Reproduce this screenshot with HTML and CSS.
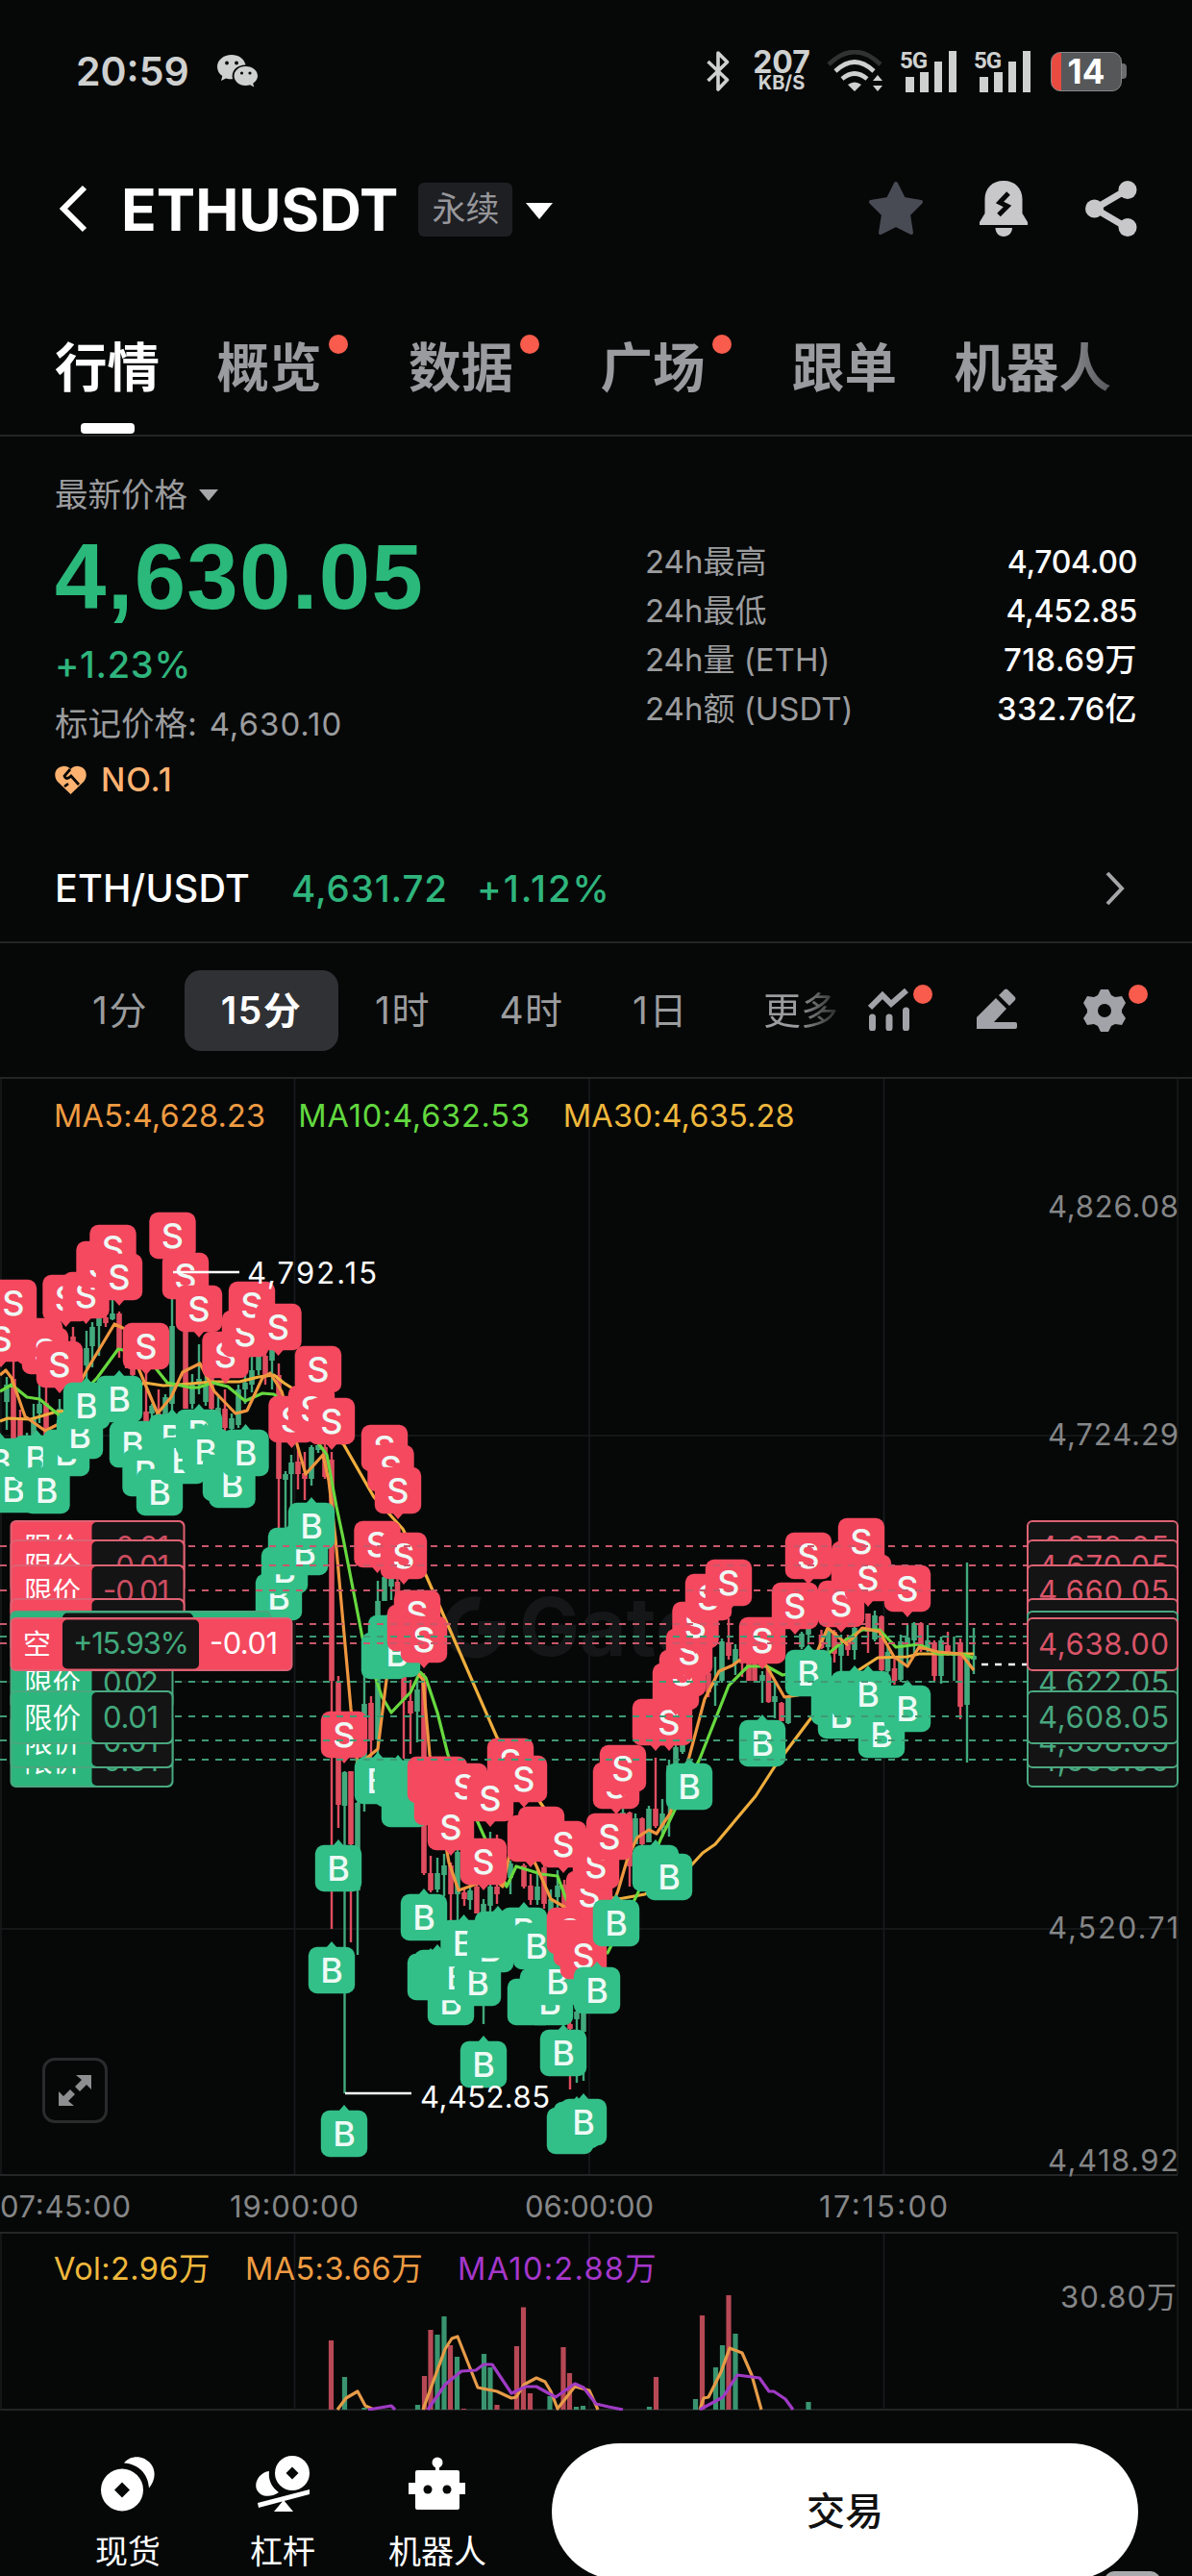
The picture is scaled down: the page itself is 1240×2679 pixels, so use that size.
FILE: index.html
```html
<!DOCTYPE html>
<html lang="zh-CN">
<head>
    <meta charset="UTF-8">
    <meta name="viewport" content="width=device-width, initial-scale=1.0">
    <title>ETHUSDT 永续</title>
    <link rel="stylesheet" href="styles.css">
</head>
<body>
    <div class="status-bar">
        <span class="clock">20:59</span>
        <svg class="wechat" width="42" height="34" viewBox="0 0 42 34">
            <path d="M15 0C6.500 0 0 5.500 0 12.500c0 4 2 7.300 5.300 9.600L4 27l5-2.600c2 .6 4 .9 6 .9h1C14 17 20 10.500 29.500 10.500 28 4 22 0 15 0z" fill="#cfd1d0"/>
            <path d="M29.500 12C22 12 17.500 17 17.500 22s5 10 12 10c1.700 0 3.300-.3 4.700-.8l4 2.300-1-3.800c3-2 4.800-4.600 4.800-7.700 0-5.500-5-10-12.500-10z" fill="#cfd1d0"/>
            <g fill="#060808"><circle cx="10" cy="8.500" r="1.900"/><circle cx="20" cy="8.500" r="1.900"/><circle cx="25.500" cy="19" r="1.600"/><circle cx="34" cy="19" r="1.600"/></g>
        </svg>
        <div class="status-right">
            <svg class="bluetooth" width="24" height="44" viewBox="0 0 24 44"><path d="M1.500 12l20 19L12 41V3l9.500 9.500L1.500 32" fill="none" stroke="#cfd1d0" stroke-width="3.600" stroke-linejoin="round"/></svg>
            <div class="net-speed"><b>207</b><span>KB/S</span></div>
            <svg class="wifi" width="60" height="44" viewBox="0 0 60 44">
                <g fill="none" stroke="#cfd1d0" stroke-width="4.600">
                    <path d="M2 15Q29-11 56 15" stroke="#303232"/>
                    <path d="M9 22Q29 3 49 22"/>
                    <path d="M16 30Q29 19 42 30"/>
                </g>
                <path d="M22 36q7-5 14 0l-7 7zM48 32l5-6 5 6zM48 37l5 6 5-6z" fill="#cfd1d0"/>
            </svg>
            <div class="signal"><span>5G</span><svg width="54" height="43" viewBox="0 0 54 43"><path d="M0 27h9v16H0zM15 22h9v21h-9zM30 11h8v32h-8zM45 0h8v43h-8z" fill="#cfd1d0"/></svg></div>
            <div class="signal"><span>5G</span><svg width="54" height="43" viewBox="0 0 54 43"><path d="M0 27h9v16H0zM15 22h9v21h-9zM30 11h8v32h-8zM45 0h8v43h-8z" fill="#cfd1d0"/></svg></div>
            <div class="battery"><span>14</span></div>
        </div>
    </div>

    <header>
        <svg class="back" width="31" height="50" viewBox="0 0 31 50"><path d="M27 3L5 25l22 22" fill="none" stroke="#fff" stroke-width="6"/></svg>
        <h1>ETHUSDT</h1>
        <span class="tag">永续</span>
        <span class="caret"></span>
        <div class="header-icons">
            <svg width="60" height="58" viewBox="0 0 60 58"><path d="M30 3l8 16 18 3-13 13 3 19-16-8-16 8 3-19L4 22l18-3z" fill="#484b54" stroke="#484b54" stroke-width="4" stroke-linejoin="round"/></svg>
            <svg width="50" height="58" viewBox="0 0 50 58">
                <path d="M25 0C13 0 5.500 8 5.500 19v15L0 43v3h50v-3l-5.500-9V19C44.500 8 37 0 25 0z" fill="#c8c8cb"/>
                <path d="M16.500 49h17.500c0 5-4 9-9 9s-8.500-4-8.500-9z" fill="#c8c8cb"/>
                <path d="M30 13l-9 9.500 8 4-9 9" fill="none" stroke="#060808" stroke-width="5"/>
            </svg>
            <svg width="54" height="58" viewBox="0 0 54 58">
                <path d="M44 9L10 29l34 20" fill="none" stroke="#c8c8cb" stroke-width="7"/>
                <g fill="#c8c8cb"><circle cx="44" cy="9.500" r="9.500"/><circle cx="9.500" cy="29" r="9.500"/><circle cx="44" cy="48.500" r="9.500"/></g>
            </svg>
        </div>
    </header>

    <nav>
        <a class="active">行情</a>
        <a class="dot">概览</a>
        <a class="dot">数据</a>
        <a class="dot">广场</a>
        <a>跟单</a>
        <a class="fade">机器人</a>
    </nav>

    <section class="ticker">
        <div class="ticker-left">
            <div class="label">最新价格<span class="caret small"></span></div>
            <div class="price">4,630.05</div>
            <div class="change">+1.23%</div>
            <div class="mark">标记价格: <span>4,630.10</span></div>
            <div class="rank">
                <svg width="33" height="31" viewBox="0 0 33 31"><path d="M16.500 30L3 17C-2 11 0 2 8 1c4-.6 7 1 8.500 3C18 2 21 .4 25 1c8 1 10 10 5 16z" fill="#ffb270"/><path d="M16 4l-6 7q2 5 7 0l8 9M10 22l4-3" fill="none" stroke="#060808" stroke-width="2.800"/></svg>
                <span>NO.1</span>
            </div>
        </div>
        <dl class="stats">
            <div><dt>24h最高</dt><dd>4,704.00</dd></div>
            <div><dt>24h最低</dt><dd>4,452.85</dd></div>
            <div><dt>24h量 (ETH)</dt><dd class="wide">718.69万</dd></div>
            <div><dt>24h额 (USDT)</dt><dd class="wide">332.76亿</dd></div>
        </dl>
    </section>

    <div class="pair">
        <span class="pair-name">ETH/USDT</span>
        <span class="pair-price">4,631.72</span>
        <span class="pair-change">+1.12%</span>
        <svg width="20" height="36" viewBox="0 0 20 36"><path d="M2 2l15 16L2 34" fill="none" stroke="#a5a6a8" stroke-width="4"/></svg>
    </div>

    <div class="intervals">
        <span>1分</span>
        <span class="active">15分</span>
        <span>1时</span>
        <span>4时</span>
        <span>1日</span>
        <span class="more">更多</span>
        <div class="tools">
            <i class="dot"><svg width="44" height="44" viewBox="0 0 44 44"><path d="M2 20L15 7l9 9L40 2" fill="none" stroke="#a2a3a8" stroke-width="6"/><path d="M4.500 30v11M22 30v11M39.500 23v18" stroke="#a2a3a8" stroke-width="7" stroke-linecap="round"/></svg></i>
            <i><svg width="44" height="44" viewBox="0 0 44 44"><path d="M1 42V30L21 10l11 11-13 14h22a2 2 0 0 1 2 2v3a2 2 0 0 1-2 2zM24 7l6-6q2-1 3 0l8 8q1 2 0 3l-6 6z" fill="#a2a3a8"/></svg></i>
            <i class="dot"><svg width="44" height="46" viewBox="0 0 44 46"><path d="M18 1h8l3 6 4 2 7-1 4 7-4 7v3l4 6-4 7-7-1-4 2-3 6h-8l-3-6-4-2-7 1-4-7 4-6v-3l-4-7 4-7 7 1 4-2z" fill="#a2a3a8"/><circle cx="22" cy="23" r="7" fill="#060808"/></svg></i>
        </div>
    </div>

    <div class="chart">
        <svg id="kline" width="1240" height="1385" viewBox="0 1122 1240 1385"></svg>
        <div class="legend">
            <span class="ma5">MA5:4,628.23</span>
            <span class="ma10">MA10:4,632.53</span>
            <span class="ma30">MA30:4,635.28</span>
        </div>
        <div class="legend volume">
            <span class="ma30">Vol:2.96万</span>
            <span class="ma5">MA5:3.66万</span>
            <span class="vma10">MA10:2.88万</span>
        </div>
        <div class="expand">
            <svg width="34" height="32" viewBox="0 0 34 32"><path d="M18 0h16v15l-5-5-7 7-5-5 7-7zM16 32H0V17l5 5 7-7 5 5-7 7z" fill="#8d8e90"/></svg>
        </div>
    </div>

    <footer>
        <div class="action">
            <svg width="56" height="57" viewBox="0 0 56 57"><path d="M24 7C31-2 45-1 52 8c6 8 4 18-2 25C49 18 39 8 24 7z" fill="#fff"/><circle cx="22" cy="35" r="22" fill="#fff"/><path d="M22 27l8 8-8 8-8-8z" fill="#060808"/></svg>
            <span>现货</span>
        </div>
        <div class="action">
            <svg width="56" height="58" viewBox="0 0 56 58"><path d="M14 16C4 17-2 28 1 35c4 8 14 9 23 3C16 32 13 25 14 16z" fill="#fff"/><circle cx="38" cy="18" r="18" fill="#fff"/><path d="M38 11.500l6.500 6.500-6.500 6.500-6.500-6.500z" fill="#060808"/><path d="M2 49l54-14v5L3 54zM29 46l10 12H19z" fill="#fff"/></svg>
            <span>杠杆</span>
        </div>
        <div class="action">
            <svg width="60" height="56" viewBox="0 0 60 56"><circle cx="30" cy="6" r="5.500" fill="#fff"/><path d="M28 8h4v6h19a2 2 0 0 1 2 2v11h6v12h-6v14a2 2 0 0 1-2 2H9a2 2 0 0 1-2-2V39H0V27h7V16a2 2 0 0 1 2-2h19z" fill="#fff"/><circle cx="20" cy="34" r="4.500" fill="#060808"/><circle cx="40" cy="34" r="4.500" fill="#060808"/></svg>
            <span>机器人</span>
        </div>
        <button class="trade">交易</button>
        <span class="handle"></span>
    </footer>

    <script src="chart.js"></script>
</body>
</html>
```
FILE: styles.css
```css
:root {
    --bg: #060808;
    --line: #222425;
    --muted: #9b9c9e;
    --up: #2fb57d;
    --badge: #f95c4c;
}

* {
    margin: 0;
    padding: 0;
    box-sizing: border-box;
}

body {
    width: 1240px;
    height: 2679px;
    overflow: hidden;
    background: var(--bg);
    color: #fff;
    font-family: Inter, 'Noto Sans CJK SC', sans-serif;
}

svg {
    display: block;
    flex-shrink: 0;
}

/* status bar */
.status-bar {
    height: 148px;
    padding: 0 69px 0 79px;
    display: flex;
    align-items: center;
    color: #cfd1d0;
}

.clock {
    font-size: 41px;
    font-weight: 600;
}

.wechat {
    margin-left: 29px;
}

.status-right {
    margin-left: auto;
    display: flex;
    align-items: center;
}

.net-speed {
    width: 60px;
    margin: 0 17px 0 24px;
    text-align: center;
}

.net-speed b {
    display: block;
    font-size: 32px;
    line-height: 25px;
}

.net-speed span {
    display: block;
    font-size: 20px;
    font-weight: 700;
    line-height: 19px;
}

.signal {
    position: relative;
    width: 61px;
    margin-left: 16px;
    padding-left: 6px;
}

.signal span {
    position: absolute;
    left: 0;
    top: -2px;
    font-family: Roboto, sans-serif;
    font-size: 24px;
    line-height: 24px;
    font-weight: 700;
    letter-spacing: -1px;
}

.battery {
    position: relative;
    width: 74px;
    height: 41px;
    margin-left: 19px;
    margin-right: 4px;
    border: 1.5px solid #858788;
    border-radius: 10px;
    background: linear-gradient(90deg, #e94b41 10px, #555759 10px);
    color: #fff;
    text-align: center;
    font-size: 35px;
    font-weight: 700;
    line-height: 38px;
}

.battery::after {
    content: "";
    position: absolute;
    right: -6px;
    top: 11px;
    width: 5px;
    height: 16px;
    border-radius: 0 4px 4px 0;
    background: #6b6d6e;
}

/* title row */
header {
    height: 136px;
    padding: 1px 57px 0 61px;
    display: flex;
    align-items: center;
}

h1 {
    margin-left: 34px;
    padding-top: 2px;
    font-size: 60.5px;
    line-height: 70px;
    font-weight: 700;
}

.tag {
    width: 98px;
    height: 56px;
    margin: 3px 0 0 21px;
    border-radius: 6px;
    background: #1e1f23;
    color: #96979b;
    font-size: 35px;
    line-height: 54px;
    text-align: center;
}

.caret {
    margin: 5px 0 0 14px;
    border: 14px solid transparent;
    border-top: 17px solid #fff;
    border-bottom: 0;
}

.caret.small {
    display: inline-block;
    margin: 0 0 6px 12px;
    border-width: 10px;
    border-top: 12px solid #a6a7a9;
    border-bottom: 0;
}

.header-icons {
    margin-left: auto;
    display: flex;
    gap: 57px;
}

.header-icons svg:last-child {
    margin-left: 3px;
}

/* tabs */
nav {
    height: 170px;
    padding: 62px 0 0 57px;
    display: flex;
    gap: 59.5px;
    border-bottom: 2px solid var(--line);
}

nav a {
    position: relative;
    font-size: 54.5px;
    line-height: 72px;
    font-weight: 700;
    color: #9a9b9f;
    white-space: nowrap;
}

nav a.active {
    color: #fff;
}

nav a.active::after {
    content: "";
    position: absolute;
    left: 27px;
    top: 94px;
    width: 56px;
    height: 11px;
    border-radius: 4px;
    background: #fff;
}

nav a.dot {
    padding-right: 31px;
}

.dot::after {
    content: "";
    position: absolute;
    right: -5px;
    top: 2px;
    width: 20px;
    height: 20px;
    border-radius: 50%;
    background: var(--badge);
}

nav a.dot::after {
    right: 4px;
}

nav a.fade {
    background: linear-gradient(90deg, #9a9b9f 65%, #55565a);
    background-clip: text;
    -webkit-background-clip: text;
    color: transparent;
}

/* price block */
.ticker {
    height: 414px;
    padding: 39px 57px 0;
    display: flex;
    justify-content: space-between;
    color: var(--muted);
}

.label, .mark {
    font-size: 34.5px;
    line-height: 44px;
}

.price {
    margin-top: 13px;
    font-family: 'Liberation Sans', Arial, sans-serif;
    font-size: 96px;
    font-weight: 700;
    letter-spacing: 1.3px;
    line-height: 100px;
    color: #2ab97b;
}

.change {
    margin-top: 19px;
    font-size: 38px;
    font-weight: 500;
    letter-spacing: 0.7px;
    line-height: 44px;
    color: var(--up);
}

.mark {
    margin-top: 18px;
}

.mark span {
    margin-left: 3px;
    font-size: 33px;
    letter-spacing: 1px;
}

.rank {
    margin-top: 14px;
    display: flex;
    align-items: center;
    gap: 15px;
    font-size: 33.5px;
    font-weight: 500;
    letter-spacing: 1px;
    line-height: 44px;
    color: #ffb270;
}

.stats {
    width: 512px;
    padding-top: 66px;
}

.stats div {
    display: flex;
    justify-content: space-between;
    font-size: 33px;
    line-height: 51px;
}

.stats dd {
    color: #fff;
    font-size: 32px;
    font-weight: 500;
    letter-spacing: -0.3px;
}

.stats .wide {
    font-size: 33px;
    letter-spacing: 0.4px;
}

.pair {
    height: 113px;
    padding: 0 70px 0 57px;
    display: flex;
    align-items: center;
    border-bottom: 2px solid var(--line);
    font-size: 39.5px;
    font-weight: 500;
}

.pair-name {
    letter-spacing: 0.2px;
}

.pair-price, .pair-change {
    color: var(--up);
    font-size: 38.5px;
    letter-spacing: 0.9px;
}

.pair-price {
    margin-left: 43px;
}

.pair-change {
    margin-left: 30px;
    letter-spacing: 2px;
}

.pair svg {
    margin-left: auto;
}

/* interval picker */
.intervals {
    height: 141px;
    padding-left: 58px;
    display: flex;
    align-items: center;
    border-bottom: 2px solid var(--line);
    font-size: 39px;
    letter-spacing: 1.5px;
    color: var(--muted);
}

.intervals span {
    width: 134px;
    line-height: 84px;
    text-align: center;
    white-space: nowrap;
}

.intervals .active {
    width: 160px;
    border-radius: 17px;
    background: #303135;
    color: #fff;
    font-weight: 600;
}

.intervals .more {
    width: 82px;
    margin-left: 38px;
    letter-spacing: 0;
    background: linear-gradient(90deg, var(--muted) 45%, #222);
    background-clip: text;
    -webkit-background-clip: text;
    color: transparent;
}

.tools {
    display: flex;
    gap: 68px;
    margin-left: 29px;
}

.tools i {
    position: relative;
}

.tools .dot::after {
    right: -23px;
    top: -4px;
}

/* chart */
.chart {
    position: relative;
    height: 1385px;
    border-bottom: 2px solid var(--line);
}

.legend {
    position: absolute;
    left: 56px;
    top: 17px;
    display: flex;
    gap: 34px;
    font-size: 32.5px;
    letter-spacing: 0.2px;
    line-height: 44px;
}

.legend .ma10 {
    letter-spacing: 0.8px;
}

.legend.volume {
    top: 1216px;
    gap: 36px;
    letter-spacing: 0.4px;
}

.ma5 {
    color: #ee9b42;
}

.ma10 {
    color: #62d83f;
}

.ma30 {
    color: #efb83c;
}

.vma10 {
    color: #a537cb;
    letter-spacing: 1.3px;
}

.expand {
    position: absolute;
    left: 44px;
    top: 1018px;
    width: 68px;
    height: 68px;
    display: flex;
    align-items: center;
    justify-content: center;
    border: 3px solid #2a2b2c;
    border-radius: 13px;
}

#kline text {
    font-size: 31px;
}

#kline .axis {
    fill: #858687;
}

#kline .badge {
    font-size: 36px;
    font-weight: 500;
    fill: #eefaf5;
    text-anchor: middle;
}

#kline .watermark {
    font-size: 84px;
    font-weight: 700;
    fill: #151617;
}

/* bottom actions */
footer {
    position: relative;
    height: 172px;
    padding-left: 82px;
    display: flex;
    overflow: hidden;
}

.action {
    width: 161px;
    padding-top: 45px;
    flex-shrink: 0;
    display: flex;
    flex-direction: column;
    align-items: center;
}

.action:first-child {
    width: 102px;
}

.action:nth-child(2) {
    width: 220px;
}

.action:nth-child(3) {
    width: 102px;
}

.action svg {
    height: 62px;
}

.action span {
    margin-top: 16px;
    font-size: 34px;
    line-height: 48px;
    white-space: nowrap;
}

.trade {
    width: 610px;
    height: 142px;
    margin: 34px 0 0 68px;
    flex-shrink: 0;
    border: 0;
    border-radius: 71px;
    background: #fff;
    color: #111;
    font: 500 40px/142px Inter, 'Noto Sans CJK SC', sans-serif;
}

.handle {
    position: absolute;
    left: 1149px;
    top: 167px;
    width: 58px;
    height: 20px;
    border-radius: 10px;
    background: #a8a9aa;
}
```
FILE: chart.js
```javascript
const RED = '#f4495f';
const GREEN = '#33bf88';
const DARK = '#141415';
const svg = document.getElementById('kline');
const out = [];

function rect(x, y, w, h, fill, extra = '') {
    out.push(`<rect x="${x}" y="${y}" width="${w}" height="${h}" fill="${fill}" ${extra}/>`);
}

function text(x, y, value, extra = '') {
    out.push(`<text x="${x}" y="${y}" ${extra}>${value}</text>`);
}

function line(x1, y1, x2, y2, stroke, extra = '') {
    out.push(`<line x1="${x1}" y1="${y1}" x2="${x2}" y2="${y2}" stroke="${stroke}" ${extra}/>`);
}

function polyline(points, stroke, width = 3.2) {
    out.push(`<polyline points="${points}" fill="none" stroke="${stroke}" stroke-width="${width}" stroke-linejoin="round"/>`);
}

// grid
[1, 306.5, 613, 919.5, 1225].forEach(x => {
    line(x, 1122, x, 2262, '#191b1c', 'stroke-width="1.5"');
    line(x, 2322, x, 2506, '#191b1c', 'stroke-width="1.5"');
});
[1493, 1749, 2006].forEach(y => line(0, y, 1225, y, '#1a1c1d', 'stroke-width="1.5"'));
[2262, 2322].forEach(y => line(0, y, 1225, y, '#242627', 'stroke-width="2"'));

// watermark
out.push('<path d="M499 1668A25 25 0 1 0 519 1693H498" fill="none" stroke="#151617" stroke-width="14"/>');
text(540, 1722, 'Gate', 'class="watermark"');

// x, high, low, body top, body bottom, 1 = up
const candles = [
    [7, 1432, 1487, 1440, 1458, 1], [14, 1415, 1500, 1434, 1500, 0], [21, 1466, 1500, 1474, 1500, 0],
    [28, 1490, 1505, 1495, 1505, 1], [35, 1460, 1500, 1474, 1497, 1], [41, 1440, 1480, 1460, 1470, 1],
    [48, 1438, 1500, 1459, 1495, 0], [62, 1455, 1480, 1465, 1475, 1], [76, 1380, 1440, 1390, 1430, 0],
    [90, 1384, 1435, 1402, 1420, 1], [96, 1375, 1422, 1380, 1400, 1], [103, 1368, 1410, 1371, 1379, 1],
    [110, 1368, 1380, 1370, 1376, 0], [117, 1350, 1373, 1366, 1372, 1], [124, 1364, 1412, 1366, 1403, 0],
    [131, 1390, 1423, 1395, 1410, 0], [138, 1420, 1435, 1422, 1430, 0], [152, 1420, 1480, 1468, 1478, 0],
    [158, 1460, 1475, 1462, 1470, 1], [165, 1445, 1476, 1470, 1476, 0], [172, 1450, 1480, 1453, 1475, 1],
    [179, 1350, 1475, 1379, 1460, 1], [193, 1350, 1465, 1385, 1465, 0], [200, 1429, 1465, 1438, 1460, 1],
    [207, 1398, 1450, 1434, 1440, 1], [214, 1430, 1462, 1440, 1458, 1], [220, 1430, 1480, 1433, 1465, 0],
    [227, 1450, 1480, 1464, 1475, 1], [234, 1445, 1490, 1465, 1485, 0], [241, 1470, 1490, 1475, 1486, 1],
    [248, 1440, 1485, 1445, 1482, 1], [255, 1430, 1460, 1438, 1445, 1], [262, 1410, 1448, 1425, 1440, 1],
    [269, 1405, 1430, 1409, 1425, 1], [276, 1405, 1440, 1410, 1430, 0], [283, 1400, 1445, 1402, 1415, 1],
    [290, 1418, 1590, 1430, 1538, 0], [297, 1530, 1590, 1533, 1539, 1], [303, 1513, 1620, 1521, 1533, 1],
    [310, 1505, 1549, 1520, 1533, 0], [317, 1510, 1560, 1532, 1538, 0], [324, 1503, 1545, 1505, 1538, 1],
    [331, 1500, 1511, 1503, 1508, 1], [338, 1500, 1538, 1505, 1536, 0], [345, 1510, 2006, 1518, 1748, 0],
    [352, 1743, 1901, 1749, 1877, 0], [358.500, 1842, 2177, 1843, 1878, 1], [365, 1842, 2020, 1842, 1918, 0],
    [372, 1874, 2033, 1875, 1966, 1], [379, 1735, 1884, 1772, 1830, 1], [386, 1764, 1830, 1771, 1810, 0],
    [393, 1644, 1825, 1665, 1809, 1], [400, 1638, 1665, 1640, 1665, 1], [407, 1638, 1664, 1640, 1650, 1],
    [413.500, 1640, 1680, 1645, 1660, 0], [420, 1740, 1829, 1743, 1768, 0], [427, 1747, 1824, 1769, 1782, 0],
    [434, 1743, 1812, 1757, 1780, 1], [441, 1740, 1950, 1749, 1948, 0], [448, 1930, 1968, 1948, 1966, 0],
    [455, 1932, 1968, 1948, 1965, 1], [462, 1928, 1972, 1940, 1950, 1], [469, 1937, 1998, 1940, 1970, 0],
    [476, 1922, 2020, 1926, 1970, 1], [483, 1965, 1982, 1968, 1975, 0], [489, 1955, 1986, 1966, 1976, 1],
    [496, 1955, 1990, 1962, 1990, 0], [503, 1975, 2105, 1980, 1990, 1], [510, 1905, 1990, 1962, 1982, 1],
    [517, 1908, 1980, 1962, 1970, 0], [531, 1935, 1970, 1938, 1953, 1], [545, 1938, 1964, 1940, 1962, 0],
    [552, 1949, 1981, 1961, 1976, 0], [559, 1941, 1981, 1962, 1976, 1], [566, 1940, 1985, 1942, 1980, 0],
    [573, 1965, 1990, 1975, 1990, 1], [580, 1945, 1990, 1961, 1973, 1], [587, 1955, 1990, 1960, 1990, 0],
    [593, 2090, 2173, 2105, 2110, 0], [600, 2090, 2166, 2092, 2100, 1], [607, 2090, 2164, 2092, 2113, 1],
    [648, 1878, 1900, 1885, 1895, 1], [655, 1884, 1962, 1885, 1941, 0], [661, 1886, 1918, 1891, 1918, 1],
    [668, 1890, 1920, 1891, 1918, 0], [675, 1878, 1916, 1881, 1916, 1], [682, 1828, 1901, 1881, 1899, 0],
    [689, 1871, 1911, 1886, 1901, 1], [696, 1830, 1910, 1836, 1852, 1], [703, 1814, 1834, 1817, 1834, 1],
    [710, 1800, 1824, 1800, 1822, 1], [737, 1727, 1765, 1740, 1760, 0], [744, 1723, 1774, 1748, 1753, 1],
    [751, 1704, 1750, 1707, 1748, 1], [758, 1683, 1726, 1708, 1722, 0], [765, 1710, 1742, 1715, 1730, 1],
    [772, 1720, 1744, 1722, 1730, 0], [779, 1728, 1748, 1730, 1748, 0], [785, 1728, 1750, 1730, 1748, 0],
    [793, 1738, 1771, 1742, 1748, 1], [799.500, 1733, 1771, 1735, 1770, 0], [806, 1750, 1787, 1764, 1770, 1],
    [813, 1770, 1790, 1771, 1790, 0], [820, 1763, 1793, 1764, 1792, 1], [834, 1697, 1715, 1699, 1713, 1],
    [841, 1690, 1710, 1692, 1700, 1], [854.500, 1695, 1715, 1700, 1714, 0], [861.500, 1693, 1725, 1695, 1713, 1],
    [868, 1695, 1729, 1697, 1720, 0], [875, 1700, 1742, 1710, 1722, 1], [882, 1700, 1722, 1703, 1716, 0],
    [889, 1690, 1726, 1693, 1716, 1], [903, 1678, 1719, 1678, 1697, 0], [910, 1675, 1707, 1680, 1705, 1],
    [917, 1680, 1738, 1681, 1737, 0], [923.500, 1713, 1740, 1718, 1738, 1], [930.500, 1722, 1752, 1735, 1748, 0],
    [937, 1700, 1749, 1707, 1747, 1], [944, 1690, 1730, 1703, 1710, 1], [951, 1687, 1720, 1688, 1706, 1],
    [958, 1687, 1718, 1688, 1716, 0], [965, 1690, 1718, 1706, 1714, 1], [972, 1706, 1748, 1708, 1743, 0],
    [979, 1702, 1751, 1706, 1743, 1], [986, 1697, 1722, 1711, 1720, 0], [992.500, 1702, 1748, 1719, 1722, 1],
    [999, 1704, 1788, 1708, 1775, 0], [1006, 1625, 1833, 1721, 1773, 1], [1013, 1693, 1741, 1722, 1726, 1]
];
candles.forEach(([x, high, low, top, bottom, up]) => {
    const color = up ? '#42aa7d' : '#df4d5f';
    rect(x - 1.200, high, 2.400, low - high, color);
    rect(x - 2.800, top, 5.600, bottom - top, color);
});

// moving averages
polyline('0,1478 8,1475 32,1476 59,1468 100,1465 150,1438 170,1441 198,1439 221,1437 249,1437 269,1432 285,1430 295,1438 306,1445 358,1503 389,1557 419,1590 443,1638 465,1688 517,1807 563,1876 600,1930 620,1970 643,1975 671,1970 719,1940 731,1927 744,1918 786,1868 806,1837 845,1785 893,1737 913,1724 944,1723 956,1720 1013,1720', '#efae3d');
polyline('0,1447 12,1440 28,1453 41,1455 63,1473 101,1433 123,1403 142,1407 162,1423 174,1438 198,1443 206,1443 221,1438 237,1442 255,1457 273,1449 285,1450 316,1480 340,1513 350,1567 357,1600 377,1703 397,1764 407,1781 427,1760 437,1739 443,1745 455,1781 466,1825 493,1886 527,1962 537,1941 563,1949 580,1951 587,1970 613,2029 632,2031 663,1970 688,1911 728,1829 758,1753 778,1733 798,1733 814,1742 841,1737 877,1707 897,1695 915,1695 932,1713 956,1710 976,1720 1000,1720 1012,1724', '#68d93f');
polyline('0,1430 6,1425 12,1433 26,1473 47,1488 63,1480 89,1427 119,1377 130,1382 144,1423 164,1470 178,1453 190,1427 208,1418 223,1447 245,1470 257,1467 273,1433 281,1428 293,1447 318,1533 336,1513 342,1540 349,1600 365,1777 372,1836 393,1819 402,1747 413,1705 423,1726 440,1747 447,1825 467,1937 477,1966 513,1953 523,1962 537,1895 560,1945 573,1975 587,1983 613,2046 643,1966 653,1932 663,1911 675,1903 683,1907 697,1886 717,1827 733,1767 748,1738 762,1732 778,1720 794,1727 816,1765 830,1763 861,1693 881,1710 897,1693 915,1697 930,1723 944,1733 956,1713 976,1718 1000,1720 1013,1737', '#ef963f');

// buy / sell marks, a trailing 1 = part of a stack, letter hidden
const marks = [
    ['S', 1, 1392], ['S', 14, 1355], ['S', 41, 1395, 1], ['S', 47, 1405], ['S', 62, 1419], ['S', 68.500, 1350],
    ['S', 89.500, 1347], ['S', 103.500, 1315], ['S', 117.500, 1298], ['S', 124, 1328], ['S', 152, 1400],
    ['S', 179.500, 1285], ['S', 193, 1327], ['S', 207, 1361], ['S', 234.500, 1409], ['S', 255, 1387],
    ['S', 262, 1357], ['S', 289.500, 1380], ['S', 303.500, 1476], ['S', 324, 1465], ['S', 331, 1424],
    ['S', 345, 1478], ['S', 358, 1804], ['S', 392.500, 1606], ['S', 400, 1506], ['S', 406.500, 1527],
    ['S', 414, 1550], ['S', 420, 1618], ['S', 427, 1693, 1], ['S', 434, 1678], ['S', 441, 1705],
    ['S', 448, 1851, 1], ['S', 455, 1874, 1], ['S', 462, 1851, 1], ['S', 469, 1900], ['S', 483, 1858],
    ['S', 503, 1936], ['S', 510, 1870], ['S', 531, 1832], ['S', 545, 1850], ['S', 552, 1912, 1],
    ['S', 563, 1903, 1], ['S', 586, 1918], ['S', 593, 2008], ['S', 600, 2021, 1], ['S', 607, 2034],
    ['S', 613, 1970], ['S', 620, 1940], ['S', 634, 1910], ['S', 641, 1857], ['S', 648, 1839],
    ['S', 682, 1791, 1], ['S', 696, 1791], ['S', 703, 1754, 1], ['S', 710, 1740], ['S', 717, 1718],
    ['S', 723.500, 1690], ['S', 737, 1661], ['S', 758, 1646], ['S', 793, 1706], ['S', 827, 1670],
    ['S', 841, 1618], ['S', 875, 1668], ['S', 889, 1627, 1], ['S', 896, 1603], ['S', 903, 1641], ['S', 944, 1652],
    ['B', 0, 1520], ['B', 14, 1549], ['B', 38, 1517], ['B', 48.500, 1550], ['B', 69, 1511], ['B', 83, 1493],
    ['B', 90, 1462], ['B', 124, 1455], ['B', 138, 1502], ['B', 151.500, 1532], ['B', 166, 1552],
    ['B', 179, 1495], ['B', 190, 1519], ['B', 207, 1490], ['B', 214, 1510], ['B', 235, 1537, 1],
    ['B', 241.500, 1544], ['B', 255.500, 1511], ['B', 290, 1661], ['B', 296, 1633], ['B', 303, 1613, 1],
    ['B', 317, 1614], ['B', 324, 1587], ['B', 345, 2049], ['B', 352, 1943], ['B', 358, 2219],
    ['B', 393, 1852], ['B', 400, 1722, 1], ['B', 407, 1704, 1], ['B', 413, 1720], ['B', 414, 1855, 1],
    ['B', 421, 1876, 1], ['B', 441, 1994], ['B', 448, 2056, 1], ['B', 455, 2052, 1], ['B', 469, 2082],
    ['B', 476, 2056], ['B', 482.500, 2021], ['B', 497, 2062], ['B', 503, 2147], ['B', 510, 2027],
    ['B', 518, 2012, 1], ['B', 545, 2008], ['B', 552, 2082, 1], ['B', 558, 2024], ['B', 565, 2071, 1],
    ['B', 572, 2082], ['B', 580, 2061], ['B', 586, 2135], ['B', 593, 2216, 1], ['B', 600, 2210, 1],
    ['B', 607, 2207], ['B', 621, 2070], ['B', 641, 2000], ['B', 682, 1943, 1], ['B', 696, 1952],
    ['B', 717, 1858], ['B', 793, 1813], ['B', 841, 1740], ['B', 868, 1770, 1], ['B', 875, 1784],
    ['B', 889, 1762, 1], ['B', 903, 1762], ['B', 917, 1804], ['B', 944, 1777]
];
marks.sort((a, b) => a[1] - b[1]);
// the dip mark at 903 sits over the lower one at 917
const low = marks.splice(marks.findIndex(m => m[1] === 917), 1)[0];
marks.splice(marks.findIndex(m => m[0] === 'B' && m[1] === 903), 0, low);
marks.forEach(([side, x, y, blank]) => {
    const fill = side === 'S' ? RED : GREEN;
    const tip = side === 'S'
        ? `M${x - 6} ${y + 23}h12l-6 7z`
        : `M${x - 6} ${y - 23}h12l-6 -7z`;
    out.push(`<path d="${tip}" fill="${fill}"/>`);
    rect(x - 24.200, y - 24.200, 48.400, 48.400, fill, 'rx="9"');
    if (!blank) {
        text(x, y + 13, side, 'class="badge"');
    }
});

// open orders
const orders = [
    [1608, '4,678.05', RED, '-0.01'], [1628, '4,670.05', RED, '-0.01'], [1654, '4,660.05', RED, '-0.01'],
    [1689, '', RED, ''], [1702, '', '#2cb67d', ''],
    [1830, '4,590.05', '#2cb67d', '0.01'], [1810, '4,598.05', '#2cb67d', '0.01'],
    [1749, '4,622.05', '#2cb67d', '0.02'], [1785, '4,608.05', '#2cb67d', '0.01'], [1709, '4,638.00', RED, '-0.01']
];
orders.forEach(([y, , color]) => {
    line(0, y, 1068, y, color === RED ? '#c8586a' : '#3f9a74', 'stroke-width="2" stroke-dasharray="7 7"');
});
line(1021, 1731, 1068, 1731, '#fff', 'stroke-width="2.5" stroke-dasharray="7 7"');

orders.forEach(([lineY, price, color, amount]) => {
    const y = lineY + 1;
    const stroke = color === RED ? '#dd6273' : '#4aa77f';
    const border = `stroke="${stroke}" stroke-width="2" rx="5"`;
    if (lineY === 1709) {
        rect(11.500, y - 27, 292, 54, RED, border);
        rect(65, y - 25.500, 142, 51, DARK, 'rx="5"');
        text(24, y + 11, '空', 'fill="#fff" style="font-size:29px"');
        text(76, y + 10, '+15.93%', 'fill="#42a97c" textLength="121"');
        text(218, y + 10, amount, 'fill="#fff" textLength="71"');
    } else if (lineY === 1702) {
        rect(11.500, y - 27, 270, 54, color, border);
        rect(65, y - 25.500, 136, 51, DARK, 'rx="5"');
    } else {
        const width = color === RED ? 180 : 168;
        rect(11.500, y - 27, width, 54, color, border);
        rect(95.500, y - 26, width - 85, 52, DARK, 'rx="5"');
        if (amount) {
            text(25, y + 11, '限价', 'fill="#fff" style="font-size:29.500px"');
            text(107, y + 11, amount, `fill="${color === RED ? '#cd4d60' : '#42a97c'}" textLength="${color === RED ? 69 : 58}"`);
        }
    }
    rect(1069, y - 27, 156, 54, DARK, border);
    if (price) {
        text(1080, y + 11, price, `fill="${color === RED ? '#da5468' : '#48a67e'}" textLength="136"`);
    }
});

// extremes
line(180, 1323, 249, 1323, '#fff', 'stroke-width="2.5"');
text(257, 1335, '4,792.15', 'fill="#fff" textLength="135"');
line(359, 2177, 428, 2177, '#fff', 'stroke-width="2.5"');
text(437, 2192, '4,452.85', 'fill="#fff" textLength="135"');

// axes
[['4,826.08', 1266], ['4,724.29', 1503], ['4,520.71', 2016], ['4,418.92', 2258]].forEach(([label, y]) => {
    text(1226, y, label, 'class="axis" text-anchor="end" textLength="136"');
});
text(1224, 2400, '30.80万', 'class="axis" text-anchor="end" textLength="121"');
text(0, 2306, '07:45:00', 'class="axis" textLength="136"');
[['19:00:00', 306], ['06:00:00', 613], ['17:15:00', 919]].forEach(([label, x]) => {
    text(x, 2306, label, 'class="axis" text-anchor="middle" textLength="134"');
});

// volume: x, top, 1 = up
const volume = [
    [344.500, 2434, 0], [358.500, 2472, 1], [379, 2504, 1], [434.500, 2501, 1], [441.500, 2471, 0], [448, 2423, 0],
    [455, 2428, 1], [462, 2409, 1], [468.500, 2439, 0], [475.500, 2451, 1], [482.500, 2505, 0], [503.500, 2448, 1],
    [510, 2462, 1], [517, 2501, 0], [537.500, 2440, 0], [544.500, 2399.500, 0], [551.500, 2489, 0], [572, 2492, 1],
    [586, 2441, 0], [592.500, 2468, 0], [599.500, 2503, 1], [606.500, 2502, 1], [675.500, 2503, 1], [682.500, 2472, 0],
    [723.500, 2495, 1], [730.500, 2408, 0], [744.500, 2462, 1], [751.500, 2439, 1], [758, 2387, 0], [765, 2427, 1],
    [841, 2498, 1]
];
volume.forEach(([x, top, up]) => rect(x - 2.600, top, 5.200, 2506 - top, up ? '#39946f' : '#b74855'));

polyline('351,2506 360,2494 372,2487 380,2502 387,2505', '#e69b48');
polyline('440,2506 463,2443 470,2432 476,2430 497,2483 517,2487 532,2494 537,2493 545,2480 558,2473 567,2477 573,2487 580,2505 598,2482 613,2486 622,2506', '#e69b48');
polyline('728,2506 732,2494 737,2493 750,2467 759,2442 772,2447 782,2470 792,2506', '#e69b48');
polyline('383,2506 407,2502 411,2506', '#a03bc5');
polyline('445,2506 463,2480 480,2466 495,2465 503,2459 512,2459 532,2489 547,2482 558,2482 578,2493 598,2479 607,2483 620,2500 633,2503 648,2506', '#a03bc5');
polyline('728,2506 752,2493 767,2470 790,2473 800,2487 805,2487 817,2495 825,2506', '#a03bc5');

svg.innerHTML = out.join('');
```
